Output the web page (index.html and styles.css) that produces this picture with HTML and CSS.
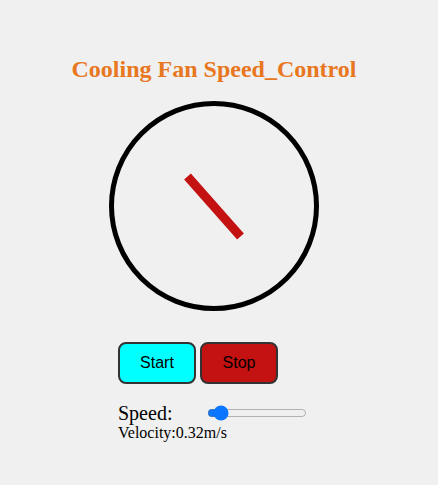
FILE: index.html
```html
<!DOCTYPE html>
<html>
<head>
<meta charset="utf-8">
<link rel="stylesheet" href="styles.css">
</head>
<body>
<div class="app">
  <h1 class="title">Cooling Fan Speed_Control</h1>
  <div class="fan">
    <div class="blade"></div>
  </div>
  <div class="controls">
    <div class="buttons">
      <button class="btn start">Start</button>
      <button class="btn stop">Stop</button>
    </div>
    <div class="speed">
      <span class="speed-label">Speed:</span>
      <input class="slider" type="range" min="0" max="5" step="0.01" value="0.32">
    </div>
    <div class="velocity">Velocity:0.32m/s</div>
  </div>
</div>
</body>
</html>
```

FILE: styles.css
```css
html, body {
  margin: 0;
  padding: 0;
  background: #f0f0f0;
}
.app {
  width: 428px;
  font-family: "Liberation Serif", serif;
}
.title {
  margin: 0;
  padding-top: 54px;
  text-align: center;
  font-size: 24px;
  font-weight: bold;
  color: #e8771f;
  line-height: 30px;
}
.fan {
  box-sizing: border-box;
  width: 210px;
  height: 210px;
  margin: 17px auto 0;
  border: 5px solid #000;
  border-radius: 50%;
  position: relative;
}
.blade {
  position: absolute;
  left: 60px;
  top: 96px;
  width: 80px;
  height: 9px;
  background: #c41212;
  transform: rotate(48.5deg);
}
.controls {
  padding-left: 118px;
  margin-top: 31px;
}
.buttons {
  display: flex;
  gap: 4px;
}
.btn {
  box-sizing: border-box;
  width: 78px;
  height: 42px;
  border: 2px solid #333;
  border-radius: 8px;
  font-family: "Liberation Sans", Arial, sans-serif;
  font-size: 16px;
  color: #000;
  padding: 0;
}
.start { background: #00ffff; }
.stop { background: #c41212; }
.speed {
  display: flex;
  align-items: center;
  margin-top: 18px;
  height: 22px;
}
.speed-label {
  font-size: 20px;
}
.slider {
  width: 100px;
  margin: 0 0 0 35px;
  accent-color: #0b76ff;
}
.velocity {
  font-size: 16px;
  line-height: 18px;
}
```
